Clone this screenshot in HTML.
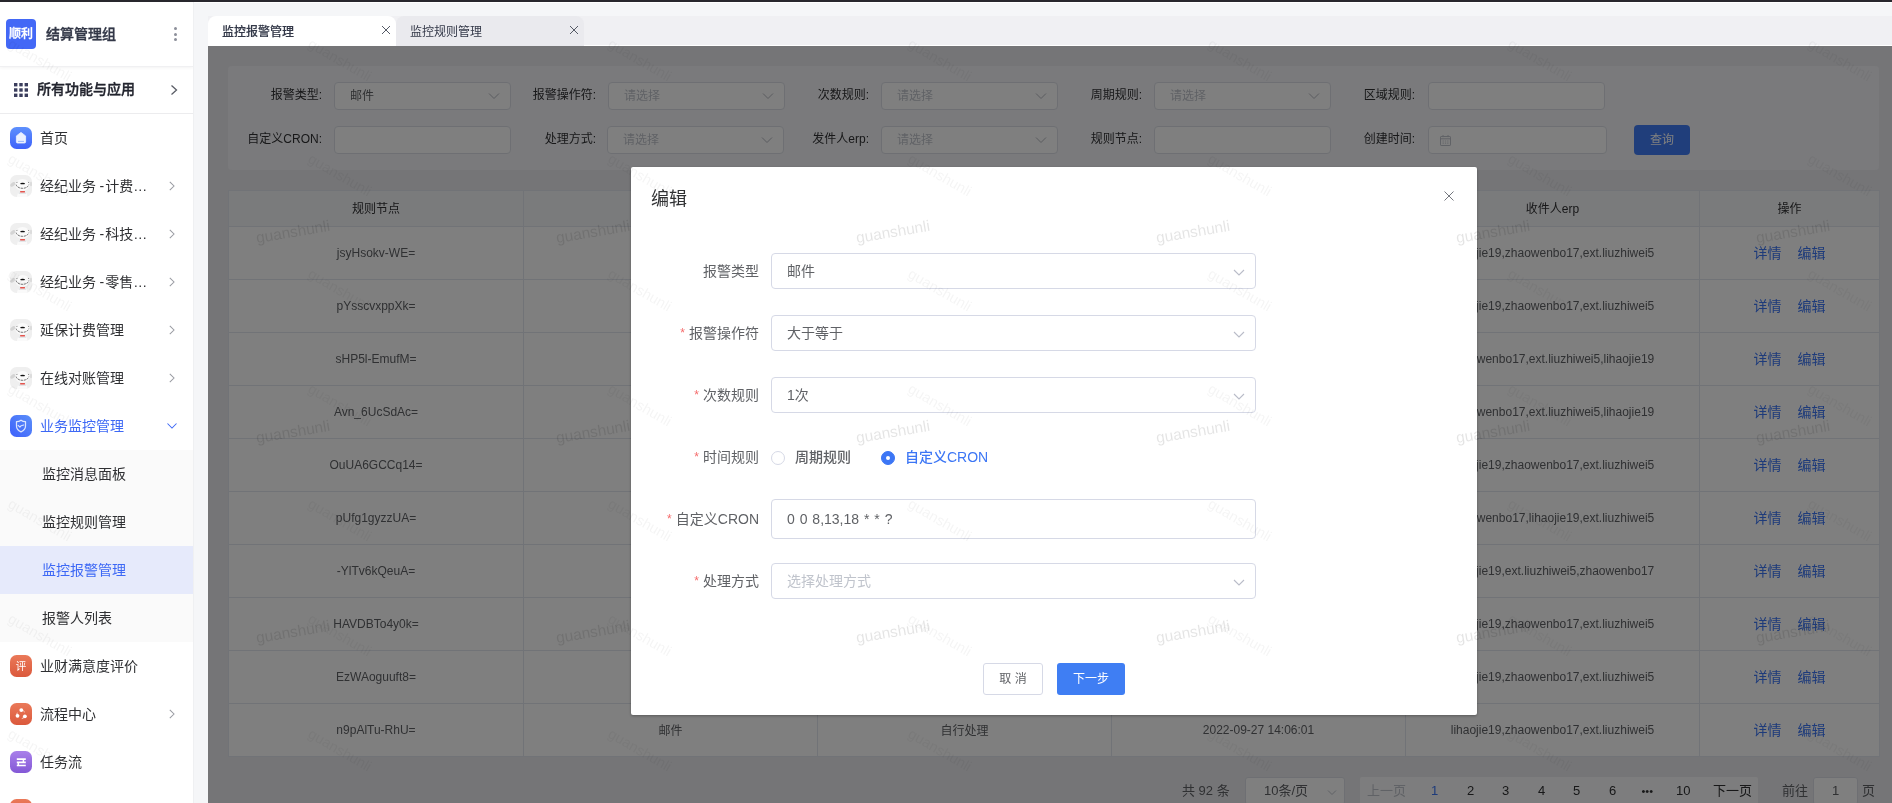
<!DOCTYPE html>
<html lang="zh-CN"><head><meta charset="utf-8"><title>监控报警管理</title>
<style>
*{box-sizing:border-box;margin:0;padding:0}
html,body{width:1892px;height:803px;overflow:hidden;background:#f5f6f8;font-family:"Liberation Sans","Noto Sans CJK SC",sans-serif;font-size:14px;color:#333;-webkit-font-smoothing:antialiased}
.topbar{position:absolute;left:0;top:0;width:1892px;height:2px;background:#28272d;z-index:50}
/* sidebar */
.side{will-change:transform;position:absolute;left:0;top:2px;width:194px;height:801px;background:#fff;border-right:1px solid #eff0f2;overflow:hidden}
.brand{position:absolute;left:0;top:0;width:193px;height:65px;border-bottom:1px solid #f0f0f2;box-shadow:0 1px 3px rgba(0,0,0,.05)}
.logo{position:absolute;left:6px;top:17px;width:30px;height:30px;border-radius:4px;background:#4368f6;color:#fff;font-size:12px;font-weight:500;-webkit-text-stroke:.3px #fff;line-height:30px;text-align:center}
.bname{position:absolute;left:46px;top:19px;font-size:14px;font-weight:500;-webkit-text-stroke:.35px #333848;color:#333848;line-height:26px}
.dots{position:absolute;left:174px;top:25px;width:4px}
.dots i{display:block;width:3px;height:3px;border-radius:50%;background:#8c8f9a;margin-bottom:2.5px}
.allapps{position:absolute;left:0;top:65px;width:193px;height:47px;border-bottom:1px solid #ececee}
.allapps .gi{position:absolute;left:14px;top:16px;width:14px;height:14px}
.allapps .t{position:absolute;left:37px;top:9px;font-size:14px;font-weight:500;-webkit-text-stroke:.35px #22242e;color:#22242e;line-height:26px}
.chev{position:absolute;width:8px;height:12px;fill:none;stroke:#9a9ca3;stroke-width:1.05}
.hy{margin:0 1px 0 3.5px}
.mi{position:absolute;left:0;width:193px;height:48px}
.mi .ic{position:absolute;left:10px;top:13px;width:22px;height:22px;border-radius:6.5px;overflow:hidden}
.mi .t{position:absolute;left:40px;top:11px;line-height:26px;font-size:14px;color:#2f3033;white-space:nowrap}
.mi.act .t{color:#3d68f5}
.sub{position:absolute;left:0;top:448px;width:193px;height:192px;background:#fafafa}
.si{position:absolute;left:0;width:193px;height:48px}
.si .t{position:absolute;left:42px;top:11px;line-height:26px;font-size:14px;color:#2f3033}
.si.on{background:#e6eafb}
.si.on .t{color:#3d68f5}
/* main */
.main{box-shadow:inset 0 1px 0 #fff;will-change:transform;position:absolute;left:194px;top:2px;width:1698px;height:801px;overflow:hidden}
.tabs{position:absolute;left:14px;top:14px;width:1684px;height:30px;background:#f0f0f3;border-bottom:1px solid #fff}
.tab{position:absolute;top:0;height:30px;width:188px;font-size:12px;color:#333848;border-radius:8px 8px 0 0}
.tab.active{left:0;background:#fff;font-weight:500;-webkit-text-stroke:.15px #333848}
.tab:nth-child(2){left:188px;background:#eaeaee;font-weight:400}
.tab .tt{position:absolute;left:14px;top:6px;line-height:20px}
.tab .tx{position:absolute;left:173px;top:9px;width:10px;height:10px;stroke:#555a66;stroke-width:1;fill:none}
.content{position:absolute;left:14px;top:44px;width:1684px;height:757px;background:#ebebef}
.mask{position:absolute;left:14px;top:44px;width:1684px;height:757px;background:rgba(0,0,0,.5)}
/* filter */
.filter{position:absolute;left:20px;top:20px;width:1651px;height:104px;background:#f4f4f8;border-radius:4px}
.fl{position:absolute;margin-top:-1px;font-size:12px;color:#303133;line-height:28px;text-align:right;width:120px;white-space:nowrap}
.fi{position:absolute;width:177px;height:28px;border:1px solid #dcdfe6;border-radius:4px;background:#fff;font-size:12px;line-height:26px;padding-left:15px;color:#c0c4cc}
.fi.v{color:#606266}
.fi svg{position:absolute;right:10.5px;top:9px;width:12px;height:8px;fill:none;stroke:#b4b7be;stroke-width:1}
.qbtn{position:absolute;left:1406px;top:59px;width:56px;height:30px;border-radius:4px;background:#417df6;color:#fff;font-size:12px;line-height:30px;text-align:center}
/* table */
.tb{position:absolute;left:20px;top:144px;width:1651px;border-collapse:collapse;table-layout:fixed;background:#fff;font-size:12px;color:#606266}
.tb th,.tb td{border:1px solid #e2e6ee;text-align:center;font-weight:400;padding:0;white-space:nowrap;overflow:hidden}
.tb th{height:36px;padding-bottom:3px;color:#303133;background:#f5f6f8}
.tb td{height:53px}
.tb td.op a{color:#3c76f5;font-size:14px;margin:0 8px;position:relative;top:-1px}
.tb td span.c{position:relative;top:-1px}
/* pager */
.pager{position:absolute;left:0;top:731px;width:1684px;height:28px;font-size:13px;color:#606266}
.pager>*{position:absolute;top:0;height:28px;line-height:28px}
/* modal */
.modal{position:absolute;left:437px;top:165px;width:846px;height:548px;background:#fff;border-radius:2px;box-shadow:0 1px 3px rgba(0,0,0,.3)}
.modal h3{position:absolute;left:20px;top:19px;font-size:18px;font-weight:400;color:#303133;line-height:26px}
.modal .close{position:absolute;left:813px;top:24px;width:10px;height:10px;stroke:#74777e;stroke-width:1;fill:none}
.lab{position:absolute;left:0;width:128px;text-align:right;font-size:14px;color:#606266;line-height:36px;white-space:nowrap}
.lab b{color:#f56c6c;font-weight:400;margin-right:4px;font-size:12px;position:relative;top:-1px}
.inp{position:absolute;left:140px;width:485px;height:36px;border:1px solid #d6d9e6;border-radius:4px;font-size:14px;color:#606266;line-height:34px;padding-left:15px;background:#fff}
.inp.ph{color:#c0c4cc}
.inp svg{position:absolute;right:10.5px;top:15px;width:12px;height:7px;fill:none;stroke:#b9bcc8;stroke-width:1.1}
.radio{position:absolute;top:284px;width:14px;height:14px;border-radius:50%;border:1px solid #d6d9e6;background:#fff}
.radio.on{border-color:#3c76f5;background:#3c76f5}
.radio.on:after{content:"";position:absolute;left:4px;top:4px;width:4px;height:4px;border-radius:50%;background:#fff}
.rl{position:absolute;top:272px;line-height:36px;font-size:14px;font-weight:500;color:#606266}
.rl.on{color:#3c76f5}
.btn{position:absolute;top:496px;height:32px;border-radius:3px;font-size:12px;line-height:30px;text-align:center}
.btn.c{left:352px;width:60px;border:1px solid #d6d9e6;color:#606266;background:#fff}
.btn.p{left:426px;width:68px;background:#3f7ef3;color:#fff;line-height:32px}
/* watermark */
.wmlayer{position:absolute;left:0;top:0;width:1892px;height:803px;overflow:hidden;pointer-events:none;z-index:40}
.wm1,.wm2{position:absolute;width:120px;height:24px;line-height:24px;text-align:center;white-space:nowrap}
.wm1{font-size:15.4px;color:rgba(0,0,0,.105);transform:rotate(-9.5deg)}
.wm2{font-size:14.5px;color:rgba(0,0,0,.042);transform:rotate(30deg)}

</style></head>
<body>
<div class="topbar"></div>
<div class="side">
  <div class="brand">
    <div class="logo">顺利</div>
    <div class="bname">结算管理组</div>
    <div class="dots"><i></i><i></i><i></i></div>
  </div>
  <div class="allapps">
    <svg class="gi" viewBox="0 0 14 14" fill="#3a3d5c"><rect x="0" y="0" width="3.4" height="3.4"/><rect x="5.3" y="0" width="3.4" height="3.4"/><rect x="10.6" y="0" width="3.4" height="3.4"/><rect x="0" y="5.3" width="3.4" height="3.4"/><rect x="5.3" y="5.3" width="3.4" height="3.4"/><rect x="10.6" y="5.3" width="3.4" height="3.4"/><rect x="0" y="10.6" width="3.4" height="3.4"/><rect x="5.3" y="10.6" width="3.4" height="3.4"/><rect x="10.6" y="10.6" width="3.4" height="3.4"/></svg>
    <div class="t">所有功能与应用</div>
    <svg class="chev" style="left:170px;top:17px" viewBox="0 0 8 12"><path d="M1.5 1.5L6.5 6L1.5 10.5" stroke="#5a5d66" stroke-width="1.3"/></svg>
  </div>
  <div class="mi" style="top:112px"><div class="ic" style="background:linear-gradient(180deg,#5e90fd,#3e62fa)"><svg viewBox="0 0 22 22" width="22" height="22"><path d="M11 5.4L15.6 8.9V14.9a1.1 1.1 0 0 1-1.1 1.1H7.5a1.1 1.1 0 0 1-1.1-1.1V8.9Z" fill="#ebf1ff" stroke="#ebf1ff" stroke-width=".8" stroke-linejoin="round"/><path d="M8 14.4H14" stroke="#8fb0fb" stroke-width=".9"/></svg></div><div class="t">首页</div></div>
  <div class="mi" style="top:160px"><div class="ic jd"><svg viewBox="0 0 22 22" width="22" height="22"><rect width="22" height="22" fill="#efefef"/><ellipse cx="2.8" cy="9.4" rx="2.9" ry="1.7" fill="#d4d4d4" transform="rotate(-38 2.8 9.4)"/><ellipse cx="21" cy="9" rx="1.2" ry="2.2" fill="#dcdcdc"/><path d="M6.8 22L8 17.8H16.6L17.6 22Z" fill="#fafafa"/><path d="M8.6 17.2H16.2V19H8.6Z" fill="#e4e6e8"/><ellipse cx="12.4" cy="9.8" rx="7.2" ry="5.9" fill="#fafafa"/><path d="M6.1 9.6C7.4 14.6 17.6 14.6 18.8 9.6" fill="none" stroke="#3a3a3a" stroke-width=".7" stroke-dasharray="2.2 .8"/><ellipse cx="12.6" cy="8.5" rx="2.4" ry=".85" fill="#111"/><path d="M6.5 8L7.4 6.9M18.9 8L18.2 6.9" stroke="#444" stroke-width=".6" fill="none"/><rect x="10.1" y="16.1" width="4.9" height="1.3" rx=".3" fill="#e4554e"/></svg></div><div class="t">经纪业务<span class="hy">-</span>计费…</div><svg class="chev" style="left:168px;top:18px" viewBox="0 0 8 12"><path d="M1.8 1.8L6 6L1.8 10.2"/></svg></div>
  <div class="mi" style="top:208px"><div class="ic jd"><svg viewBox="0 0 22 22" width="22" height="22"><rect width="22" height="22" fill="#efefef"/><ellipse cx="2.8" cy="9.4" rx="2.9" ry="1.7" fill="#d4d4d4" transform="rotate(-38 2.8 9.4)"/><ellipse cx="21" cy="9" rx="1.2" ry="2.2" fill="#dcdcdc"/><path d="M6.8 22L8 17.8H16.6L17.6 22Z" fill="#fafafa"/><path d="M8.6 17.2H16.2V19H8.6Z" fill="#e4e6e8"/><ellipse cx="12.4" cy="9.8" rx="7.2" ry="5.9" fill="#fafafa"/><path d="M6.1 9.6C7.4 14.6 17.6 14.6 18.8 9.6" fill="none" stroke="#3a3a3a" stroke-width=".7" stroke-dasharray="2.2 .8"/><ellipse cx="12.6" cy="8.5" rx="2.4" ry=".85" fill="#111"/><path d="M6.5 8L7.4 6.9M18.9 8L18.2 6.9" stroke="#444" stroke-width=".6" fill="none"/><rect x="10.1" y="16.1" width="4.9" height="1.3" rx=".3" fill="#e4554e"/></svg></div><div class="t">经纪业务<span class="hy">-</span>科技…</div><svg class="chev" style="left:168px;top:18px" viewBox="0 0 8 12"><path d="M1.8 1.8L6 6L1.8 10.2"/></svg></div>
  <div class="mi" style="top:256px"><div class="ic jd"><svg viewBox="0 0 22 22" width="22" height="22"><rect width="22" height="22" fill="#efefef"/><ellipse cx="2.8" cy="9.4" rx="2.9" ry="1.7" fill="#d4d4d4" transform="rotate(-38 2.8 9.4)"/><ellipse cx="21" cy="9" rx="1.2" ry="2.2" fill="#dcdcdc"/><path d="M6.8 22L8 17.8H16.6L17.6 22Z" fill="#fafafa"/><path d="M8.6 17.2H16.2V19H8.6Z" fill="#e4e6e8"/><ellipse cx="12.4" cy="9.8" rx="7.2" ry="5.9" fill="#fafafa"/><path d="M6.1 9.6C7.4 14.6 17.6 14.6 18.8 9.6" fill="none" stroke="#3a3a3a" stroke-width=".7" stroke-dasharray="2.2 .8"/><ellipse cx="12.6" cy="8.5" rx="2.4" ry=".85" fill="#111"/><path d="M6.5 8L7.4 6.9M18.9 8L18.2 6.9" stroke="#444" stroke-width=".6" fill="none"/><rect x="10.1" y="16.1" width="4.9" height="1.3" rx=".3" fill="#e4554e"/></svg></div><div class="t">经纪业务<span class="hy">-</span>零售…</div><svg class="chev" style="left:168px;top:18px" viewBox="0 0 8 12"><path d="M1.8 1.8L6 6L1.8 10.2"/></svg></div>
  <div class="mi" style="top:304px"><div class="ic jd"><svg viewBox="0 0 22 22" width="22" height="22"><rect width="22" height="22" fill="#efefef"/><ellipse cx="2.8" cy="9.4" rx="2.9" ry="1.7" fill="#d4d4d4" transform="rotate(-38 2.8 9.4)"/><ellipse cx="21" cy="9" rx="1.2" ry="2.2" fill="#dcdcdc"/><path d="M6.8 22L8 17.8H16.6L17.6 22Z" fill="#fafafa"/><path d="M8.6 17.2H16.2V19H8.6Z" fill="#e4e6e8"/><ellipse cx="12.4" cy="9.8" rx="7.2" ry="5.9" fill="#fafafa"/><path d="M6.1 9.6C7.4 14.6 17.6 14.6 18.8 9.6" fill="none" stroke="#3a3a3a" stroke-width=".7" stroke-dasharray="2.2 .8"/><ellipse cx="12.6" cy="8.5" rx="2.4" ry=".85" fill="#111"/><path d="M6.5 8L7.4 6.9M18.9 8L18.2 6.9" stroke="#444" stroke-width=".6" fill="none"/><rect x="10.1" y="16.1" width="4.9" height="1.3" rx=".3" fill="#e4554e"/></svg></div><div class="t">延保计费管理</div><svg class="chev" style="left:168px;top:18px" viewBox="0 0 8 12"><path d="M1.8 1.8L6 6L1.8 10.2"/></svg></div>
  <div class="mi" style="top:352px"><div class="ic jd"><svg viewBox="0 0 22 22" width="22" height="22"><rect width="22" height="22" fill="#efefef"/><ellipse cx="2.8" cy="9.4" rx="2.9" ry="1.7" fill="#d4d4d4" transform="rotate(-38 2.8 9.4)"/><ellipse cx="21" cy="9" rx="1.2" ry="2.2" fill="#dcdcdc"/><path d="M6.8 22L8 17.8H16.6L17.6 22Z" fill="#fafafa"/><path d="M8.6 17.2H16.2V19H8.6Z" fill="#e4e6e8"/><ellipse cx="12.4" cy="9.8" rx="7.2" ry="5.9" fill="#fafafa"/><path d="M6.1 9.6C7.4 14.6 17.6 14.6 18.8 9.6" fill="none" stroke="#3a3a3a" stroke-width=".7" stroke-dasharray="2.2 .8"/><ellipse cx="12.6" cy="8.5" rx="2.4" ry=".85" fill="#111"/><path d="M6.5 8L7.4 6.9M18.9 8L18.2 6.9" stroke="#444" stroke-width=".6" fill="none"/><rect x="10.1" y="16.1" width="4.9" height="1.3" rx=".3" fill="#e4554e"/></svg></div><div class="t">在线对账管理</div><svg class="chev" style="left:168px;top:18px" viewBox="0 0 8 12"><path d="M1.8 1.8L6 6L1.8 10.2"/></svg></div>
  <div class="mi act" style="top:400px"><div class="ic" style="background:linear-gradient(45deg,#3d60fb,#5b8ff9)"><svg viewBox="0 0 22 22" width="22" height="22"><path d="M11 5.2C9.5 6.3 8 6.6 6.5 6.6V11C6.5 13.7 8.4 15.7 11 16.8C13.6 15.7 15.5 13.7 15.5 11V6.6C14 6.6 12.5 6.3 11 5.2Z" fill="none" stroke="#fff" stroke-opacity=".8" stroke-width="1.25" stroke-linejoin="round"/><path d="M8.1 10.3L9.9 12.2L11.2 10.7L13.7 10" fill="none" stroke="#fff" stroke-opacity=".8" stroke-width="1.1" stroke-linejoin="round" stroke-linecap="round"/></svg></div><div class="t">业务监控管理</div><svg class="chev" style="left:166px;top:20px;width:12px;height:8px" viewBox="0 0 12 8"><path d="M1.5 1.5L6 6L10.5 1.5" stroke="#3d68f5"/></svg></div>
  <div class="sub">
    <div class="si" style="top:0"><div class="t">监控消息面板</div></div>
    <div class="si" style="top:48px"><div class="t">监控规则管理</div></div>
    <div class="si on" style="top:96px"><div class="t">监控报警管理</div></div>
    <div class="si" style="top:144px"><div class="t">报警人列表</div></div>
  </div>
  <div class="mi" style="top:640px"><div class="ic" style="background:linear-gradient(180deg,#ea7959,#db593c);color:#fff;font-size:10.5px;line-height:22.5px;text-align:center">评</div><div class="t">业财满意度评价</div></div>
  <div class="mi" style="top:688px"><div class="ic" style="background:linear-gradient(180deg,#ea7959,#db593c)"><svg viewBox="0 0 22 22" width="22" height="22"><circle cx="11.2" cy="11.4" r="4.2" fill="none" stroke="#fff" stroke-opacity=".75" stroke-width="1" stroke-dasharray="4.6 4.2" stroke-dashoffset="-1.2"/><circle cx="11.3" cy="7.1" r="1.9" fill="#fff"/><circle cx="7.5" cy="12.8" r="1.9" fill="#fff"/><circle cx="14.9" cy="13.3" r="1.9" fill="#fff"/></svg></div><div class="t">流程中心</div><svg class="chev" style="left:168px;top:18px" viewBox="0 0 8 12"><path d="M1.8 1.8L6 6L1.8 10.2"/></svg></div>
  <div class="mi" style="top:736px"><div class="ic" style="background:linear-gradient(180deg,#a980ea,#8358d6)"><svg viewBox="0 0 22 22" width="22" height="22"><path d="M6.8 8.1H15.8M6.8 11.3H15.8M6.8 14.5H15.8" stroke="#fff" stroke-width="1.7"/><path d="M13.4 8.1V11.3M8.3 11.3V14.5" stroke="#fff" stroke-width="1.5"/></svg></div><div class="t">任务流</div></div>
  <div class="mi" style="top:784px"><div class="ic" style="background:linear-gradient(180deg,#ea7959,#db593c)"></div></div>
</div>

<div class="main">
  <div class="tabs">
    <div class="tab active"><span class="tt">监控报警管理</span><svg class="tx" viewBox="0 0 10 10"><path d="M1 1L9 9M9 1L1 9"/></svg></div>
    <div class="tab"><span class="tt">监控规则管理</span><svg class="tx" viewBox="0 0 10 10"><path d="M1 1L9 9M9 1L1 9"/></svg></div>
  </div>
  <div class="content">
    <div class="filter">
  <div class="fl" style="left:-26px;top:16px">报警类型:</div><div class="fi v" style="left:106px;top:16px">邮件<svg viewBox="0 0 12 8"><path d="M1 1.5L6 6.5L11 1.5"/></svg></div>
  <div class="fl" style="left:248px;top:16px">报警操作符:</div><div class="fi" style="left:380px;top:16px">请选择<svg viewBox="0 0 12 8"><path d="M1 1.5L6 6.5L11 1.5"/></svg></div>
  <div class="fl" style="left:521px;top:16px">次数规则:</div><div class="fi" style="left:653px;top:16px">请选择<svg viewBox="0 0 12 8"><path d="M1 1.5L6 6.5L11 1.5"/></svg></div>
  <div class="fl" style="left:794px;top:16px">周期规则:</div><div class="fi" style="left:926px;top:16px">请选择<svg viewBox="0 0 12 8"><path d="M1 1.5L6 6.5L11 1.5"/></svg></div>
  <div class="fl" style="left:1067px;top:16px">区域规则:</div><div class="fi" style="left:1200px;top:16px"></div>
  <div class="fl" style="left:-26px;top:60px">自定义CRON:</div><div class="fi" style="left:106px;top:60px"></div>
  <div class="fl" style="left:248px;top:60px">处理方式:</div><div class="fi" style="left:379px;top:60px">请选择<svg viewBox="0 0 12 8"><path d="M1 1.5L6 6.5L11 1.5"/></svg></div>
  <div class="fl" style="left:521px;top:60px">发件人erp:</div><div class="fi" style="left:653px;top:60px">请选择<svg viewBox="0 0 12 8"><path d="M1 1.5L6 6.5L11 1.5"/></svg></div>
  <div class="fl" style="left:794px;top:60px">规则节点:</div><div class="fi" style="left:926px;top:60px"></div>
  <div class="fl" style="left:1067px;top:60px">创建时间:</div><div class="fi" style="left:1200px;top:60px;width:179px"><svg style="left:11px;top:7.5px;width:11px;height:11px;right:auto;stroke:#c0c4cc;stroke-width:1" viewBox="0 0 11 11"><rect x=".5" y="1.5" width="10" height="9" rx=".6"/><path d="M.5 3.8H10.5M3 0V2.2M8 0V2.2"/><path d="M2.6 6H3.8M4.9 6H6.1M7.2 6H8.4M2.6 8.2H3.8M4.9 8.2H6.1M7.2 8.2H8.4" stroke-width="1.2" stroke-opacity=".8"/></svg></div>
  <div class="qbtn">查询</div>
</div>

    <table class="tb"><colgroup><col style="width:295px"><col style="width:294px"><col style="width:294px"><col style="width:294px"><col style="width:294px"><col style="width:180px"></colgroup>
<thead><tr><th>规则节点</th><th>报警类型</th><th>处理方式</th><th>创建时间</th><th>收件人erp</th><th>操作</th></tr></thead>
<tbody>
<tr><td>jsyHsokv-WE=</td><td><span class="c">邮件</span></td><td><span class="c">自行处理</span></td><td>2022-09-27 14:06:01</td><td>lihaojie19,zhaowenbo17,ext.liuzhiwei5</td><td class="op"><a>详情</a><a>编辑</a></td></tr>
<tr><td>pYsscvxppXk=</td><td><span class="c">邮件</span></td><td><span class="c">自行处理</span></td><td>2022-09-27 14:06:01</td><td>lihaojie19,zhaowenbo17,ext.liuzhiwei5</td><td class="op"><a>详情</a><a>编辑</a></td></tr>
<tr><td>sHP5l-EmufM=</td><td><span class="c">邮件</span></td><td><span class="c">自行处理</span></td><td>2022-09-27 14:06:01</td><td>zhaowenbo17,ext.liuzhiwei5,lihaojie19</td><td class="op"><a>详情</a><a>编辑</a></td></tr>
<tr><td>Avn_6UcSdAc=</td><td><span class="c">邮件</span></td><td><span class="c">自行处理</span></td><td>2022-09-27 14:06:01</td><td>zhaowenbo17,ext.liuzhiwei5,lihaojie19</td><td class="op"><a>详情</a><a>编辑</a></td></tr>
<tr><td>OuUA6GCCq14=</td><td><span class="c">邮件</span></td><td><span class="c">自行处理</span></td><td>2022-09-27 14:06:01</td><td>lihaojie19,zhaowenbo17,ext.liuzhiwei5</td><td class="op"><a>详情</a><a>编辑</a></td></tr>
<tr><td>pUfg1gyzzUA=</td><td><span class="c">邮件</span></td><td><span class="c">自行处理</span></td><td>2022-09-27 14:06:01</td><td>zhaowenbo17,lihaojie19,ext.liuzhiwei5</td><td class="op"><a>详情</a><a>编辑</a></td></tr>
<tr><td>-YlTv6kQeuA=</td><td><span class="c">邮件</span></td><td><span class="c">自行处理</span></td><td>2022-09-27 14:06:01</td><td>lihaojie19,ext.liuzhiwei5,zhaowenbo17</td><td class="op"><a>详情</a><a>编辑</a></td></tr>
<tr><td>HAVDBTo4y0k=</td><td><span class="c">邮件</span></td><td><span class="c">自行处理</span></td><td>2022-09-27 14:06:01</td><td>lihaojie19,zhaowenbo17,ext.liuzhiwei5</td><td class="op"><a>详情</a><a>编辑</a></td></tr>
<tr><td>EzWAoguuft8=</td><td><span class="c">邮件</span></td><td><span class="c">自行处理</span></td><td>2022-09-27 14:06:01</td><td>lihaojie19,zhaowenbo17,ext.liuzhiwei5</td><td class="op"><a>详情</a><a>编辑</a></td></tr>
<tr><td>n9pAlTu-RhU=</td><td><span class="c">邮件</span></td><td><span class="c">自行处理</span></td><td>2022-09-27 14:06:01</td><td>lihaojie19,zhaowenbo17,ext.liuzhiwei5</td><td class="op"><a>详情</a><a>编辑</a></td></tr>
</tbody></table>
    <div class="pager">
  <span style="left:974px">共 92 条</span>
  <span style="left:1037px;width:100px;border:1px solid #dcdfe6;border-radius:3px;background:#fff;padding-left:18px;line-height:26px">10条/页<svg style="position:absolute;right:7px;top:10.5px;width:10px;height:7px;fill:none;stroke:#c0c4cc;stroke-width:1" viewBox="0 0 10 7"><path d="M1 1.5L5 5.5L9 1.5"/></svg></span>
  <span style="left:1152px;width:398px;background:#fbfbfc;border-radius:2px"></span>
  <span style="left:1159px;color:#c0c4cc">上一页</span>
  <span style="left:1223px;color:#3c76f5">1</span>
  <span style="left:1259px;color:#303133">2</span>
  <span style="left:1294px;color:#303133">3</span>
  <span style="left:1330px;color:#303133">4</span>
  <span style="left:1365px;color:#303133">5</span>
  <span style="left:1401px;color:#303133">6</span>
  <span style="left:1433.5px;font-size:11px;letter-spacing:0;color:#303133">•••</span>
  <span style="left:1468px;color:#303133">10</span>
  <span style="left:1505px;color:#303133">下一页</span>
  <span style="left:1574px">前往</span>
  <span style="left:1605px;width:45px;border:1px solid #dcdfe6;border-radius:3px;background:#fff;text-align:center;line-height:26px">1</span>
  <span style="left:1654px">页</span>
</div>

  </div>
  <div class="mask"></div>
  <div class="modal">
  <h3>编辑</h3>
  <svg class="close" viewBox="0 0 10 10"><path d="M.5 .5L9.5 9.5M9.5 .5L.5 9.5"/></svg>
  <div class="lab" style="top:86px">报警类型</div><div class="inp" style="top:86px">邮件<svg viewBox="0 0 12 7"><path d="M1 1L6 6L11 1"/></svg></div>
  <div class="lab" style="top:148px"><b>*</b>报警操作符</div><div class="inp" style="top:148px">大于等于<svg viewBox="0 0 12 7"><path d="M1 1L6 6L11 1"/></svg></div>
  <div class="lab" style="top:210px"><b>*</b>次数规则</div><div class="inp" style="top:210px">1次<svg viewBox="0 0 12 7"><path d="M1 1L6 6L11 1"/></svg></div>
  <div class="lab" style="top:272px"><b>*</b>时间规则</div>
  <div class="radio" style="left:140px"></div><div class="rl" style="left:164px">周期规则</div>
  <div class="radio on" style="left:250px"></div><div class="rl on" style="left:274px">自定义CRON</div>
  <div class="lab" style="top:334px"><b>*</b>自定义CRON</div><div class="inp" style="top:332px;height:40px;line-height:38px;word-spacing:1px">0 0 8,13,18 * * ?</div>
  <div class="lab" style="top:396px"><b>*</b>处理方式</div><div class="inp ph" style="top:396px">选择处理方式<svg viewBox="0 0 12 7"><path d="M1 1L6 6L11 1"/></svg></div>
  <div class="btn c">取 消</div>
  <div class="btn p">下一步</div>
</div>

</div>
<div class="wmlayer"><span class="wm1" style="left:233px;top:220px">guanshunli</span><span class="wm1" style="left:533px;top:220px">guanshunli</span><span class="wm1" style="left:833px;top:220px">guanshunli</span><span class="wm1" style="left:1133px;top:220px">guanshunli</span><span class="wm1" style="left:1433px;top:220px">guanshunli</span><span class="wm1" style="left:1733px;top:220px">guanshunli</span><span class="wm1" style="left:233px;top:420px">guanshunli</span><span class="wm1" style="left:533px;top:420px">guanshunli</span><span class="wm1" style="left:833px;top:420px">guanshunli</span><span class="wm1" style="left:1133px;top:420px">guanshunli</span><span class="wm1" style="left:1433px;top:420px">guanshunli</span><span class="wm1" style="left:1733px;top:420px">guanshunli</span><span class="wm1" style="left:233px;top:620px">guanshunli</span><span class="wm1" style="left:533px;top:620px">guanshunli</span><span class="wm1" style="left:833px;top:620px">guanshunli</span><span class="wm1" style="left:1133px;top:620px">guanshunli</span><span class="wm1" style="left:1433px;top:620px">guanshunli</span><span class="wm1" style="left:1733px;top:620px">guanshunli</span><span class="wm2" style="left:-20px;top:48px">guanshunli</span><span class="wm2" style="left:280px;top:48px">guanshunli</span><span class="wm2" style="left:580px;top:48px">guanshunli</span><span class="wm2" style="left:880px;top:48px">guanshunli</span><span class="wm2" style="left:1180px;top:48px">guanshunli</span><span class="wm2" style="left:1480px;top:48px">guanshunli</span><span class="wm2" style="left:1780px;top:48px">guanshunli</span><span class="wm2" style="left:-20px;top:163px">guanshunli</span><span class="wm2" style="left:280px;top:163px">guanshunli</span><span class="wm2" style="left:580px;top:163px">guanshunli</span><span class="wm2" style="left:880px;top:163px">guanshunli</span><span class="wm2" style="left:1180px;top:163px">guanshunli</span><span class="wm2" style="left:1480px;top:163px">guanshunli</span><span class="wm2" style="left:1780px;top:163px">guanshunli</span><span class="wm2" style="left:-20px;top:278px">guanshunli</span><span class="wm2" style="left:280px;top:278px">guanshunli</span><span class="wm2" style="left:580px;top:278px">guanshunli</span><span class="wm2" style="left:880px;top:278px">guanshunli</span><span class="wm2" style="left:1180px;top:278px">guanshunli</span><span class="wm2" style="left:1480px;top:278px">guanshunli</span><span class="wm2" style="left:1780px;top:278px">guanshunli</span><span class="wm2" style="left:-20px;top:393px">guanshunli</span><span class="wm2" style="left:280px;top:393px">guanshunli</span><span class="wm2" style="left:580px;top:393px">guanshunli</span><span class="wm2" style="left:880px;top:393px">guanshunli</span><span class="wm2" style="left:1180px;top:393px">guanshunli</span><span class="wm2" style="left:1480px;top:393px">guanshunli</span><span class="wm2" style="left:1780px;top:393px">guanshunli</span><span class="wm2" style="left:-20px;top:508px">guanshunli</span><span class="wm2" style="left:280px;top:508px">guanshunli</span><span class="wm2" style="left:580px;top:508px">guanshunli</span><span class="wm2" style="left:880px;top:508px">guanshunli</span><span class="wm2" style="left:1180px;top:508px">guanshunli</span><span class="wm2" style="left:1480px;top:508px">guanshunli</span><span class="wm2" style="left:1780px;top:508px">guanshunli</span><span class="wm2" style="left:-20px;top:623px">guanshunli</span><span class="wm2" style="left:280px;top:623px">guanshunli</span><span class="wm2" style="left:580px;top:623px">guanshunli</span><span class="wm2" style="left:880px;top:623px">guanshunli</span><span class="wm2" style="left:1180px;top:623px">guanshunli</span><span class="wm2" style="left:1480px;top:623px">guanshunli</span><span class="wm2" style="left:1780px;top:623px">guanshunli</span><span class="wm2" style="left:-20px;top:738px">guanshunli</span><span class="wm2" style="left:280px;top:738px">guanshunli</span><span class="wm2" style="left:580px;top:738px">guanshunli</span><span class="wm2" style="left:880px;top:738px">guanshunli</span><span class="wm2" style="left:1180px;top:738px">guanshunli</span><span class="wm2" style="left:1480px;top:738px">guanshunli</span><span class="wm2" style="left:1780px;top:738px">guanshunli</span></div>
</body></html>
